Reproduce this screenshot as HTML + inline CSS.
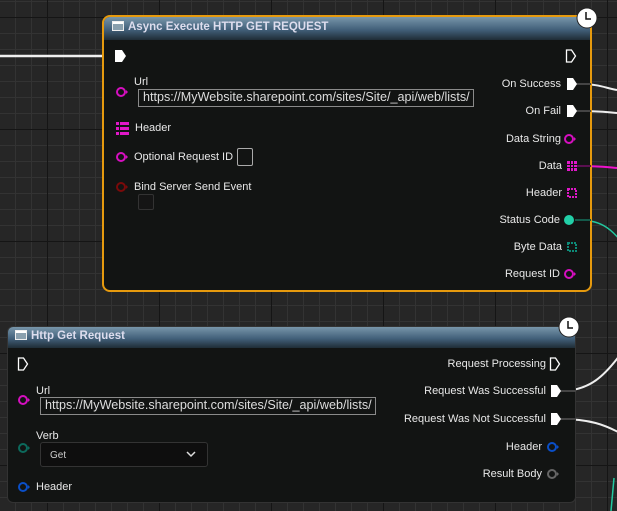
<!DOCTYPE html>
<html><head><meta charset="utf-8"><style>
*{margin:0;padding:0;box-sizing:border-box}
body{width:617px;height:511px;overflow:hidden;position:relative;font-family:"Liberation Sans",sans-serif;font-size:11px;color:#e8e8e8;
background-color:#262626;
background-image:
linear-gradient(to right,#151515 1px,transparent 1px),
linear-gradient(to bottom,#151515 1px,transparent 1px),
linear-gradient(to right,#333 1px,transparent 1px),
linear-gradient(to bottom,#333 1px,transparent 1px);
background-size:112px 112px,112px 112px,16px 16px,16px 16px;
background-position:47px 17px,47px 17px,15px 1px,15px 1px;}
.a{position:absolute;white-space:nowrap}
.node{position:absolute;background:#121413;border-radius:6px;overflow:hidden}
.hdr{position:absolute;left:0;right:0;top:0;background:linear-gradient(to bottom,#7896aa,#42607a 55%,#1f2d36);font-weight:bold;color:#dde;font-size:11.5px}
.ico{display:inline-block;width:12px;height:10px;border:1px solid #eee;background:linear-gradient(#fff 0 2px,#8aa0ae 2px);vertical-align:-1px;margin-right:4px}
.box{position:absolute;border:1px solid #8a8a8a;color:#ddd;font-size:12.6px;padding-left:4px;line-height:15px}
.r{text-align:right}
</style></head><body>
<svg class="a" style="left:0;top:0" width="617" height="511">
<path d="M0 56 L112 56" stroke="#f0f0f0" stroke-width="2.5" fill="none"/>
<path d="M578 84 C600 84 605 88 617 90" stroke="#eee" stroke-width="2" fill="none"/>
<path d="M578 111 C600 111 605 112 617 113" stroke="#eee" stroke-width="2" fill="none"/>
<path d="M578 166 C600 166 605 167 617 168" stroke="#ee11cc" stroke-width="2" fill="none"/>
<path d="M578 220 C600 220 610 228 620 240" stroke="#22c8a0" stroke-width="1.5" fill="none"/>
<path d="M560 391 C590 391 605 375 620 355" stroke="#eee" stroke-width="2" fill="none"/>
<path d="M560 419 C590 419 605 425 620 433" stroke="#eee" stroke-width="2" fill="none"/>
<path d="M614 478 L611 511" stroke="#22c8a0" stroke-width="1.5" fill="none"/>
</svg>

<!-- Node 1 -->
<div class="node" style="left:102px;top:15px;width:490px;height:277px;border:2px solid #e69a0e;border-radius:8px">
<div class="hdr" style="height:23px;padding:4px 0 0 8px"><span class="ico"></span>Async Execute HTTP GET REQUEST</div>
</div>
<div class="a" style="left:134px;top:76px">Url</div>
<div class="box" style="left:138px;top:89px;width:336px;height:18px">https://MyWebsite.sharepoint.com/sites/Site/_api/web/lists/</div>
<div class="a" style="left:135px;top:122px">Header</div>
<div class="a" style="left:134px;top:151px">Optional Request ID</div>
<div class="box" style="left:237px;top:148px;width:16px;height:18px;border-color:#aaa;border-radius:2px"></div>
<div class="a" style="left:134px;top:181px">Bind Server Send Event</div>
<div class="box" style="left:138px;top:194px;width:16px;height:16px;border-color:#333;background:#151515;border-radius:2px"></div>
<div class="a r" style="right:56px;top:78px">On Success</div>
<div class="a r" style="right:56px;top:105px">On Fail</div>
<div class="a r" style="right:56px;top:133px">Data String</div>
<div class="a r" style="right:55px;top:160px">Data</div>
<div class="a r" style="right:55px;top:187px">Header</div>
<div class="a r" style="right:57px;top:214px">Status Code</div>
<div class="a r" style="right:55px;top:241px">Byte Data</div>
<div class="a r" style="right:57px;top:268px">Request ID</div>

<!-- Node 2 -->
<div class="node" style="left:7px;top:326px;width:569px;height:177px;border:1px solid #333">
<div class="hdr" style="height:21px;padding:3px 0 0 7px"><span class="ico"></span>Http Get Request</div>
</div>
<div class="a" style="left:36px;top:385px">Url</div>
<div class="box" style="left:40px;top:397px;width:336px;height:18px">https://MyWebsite.sharepoint.com/sites/Site/_api/web/lists/</div>
<div class="a" style="left:36px;top:430px">Verb</div>
<div class="box" style="left:40px;top:442px;width:168px;height:25px;border-color:#333;border-radius:3px;background:#0e0e0e;font-size:10px;padding:5px 0 0 9px;color:#ccc">Get</div>
<div class="a" style="left:36px;top:481px">Header</div>
<div class="a r" style="right:71px;top:358px">Request Processing</div>
<div class="a r" style="right:71px;top:385px">Request Was Successful</div>
<div class="a r" style="right:71px;top:413px">Request Was Not Successful</div>
<div class="a r" style="right:75px;top:441px">Header</div>
<div class="a r" style="right:75px;top:468px">Result Body</div>

<svg class="a" style="left:0;top:0" width="617" height="511">
<!-- node1 pins -->
<path d="M575 84 h16" stroke="#444" stroke-width="2"/>
<path d="M575 111 h16" stroke="#444" stroke-width="2"/>
<path d="M575 166 h16" stroke="#5a1050" stroke-width="2"/>
<path d="M575 220 h16" stroke="#145a4a" stroke-width="2"/>
<path d="M115 50 h7 l4 6 l-4 6 h-7 z" fill="#fff"/>
<path d="M566.5 50 h5 l4 6 l-4 6 h-5 z" fill="none" stroke="#fff" stroke-width="1.3"/>
<path d="M567 78 h6 l4 6 l-4 6 h-6 z" fill="#fff"/>
<path d="M567 105 h6 l4 6 l-4 6 h-6 z" fill="#fff"/>
<g fill="none" stroke-width="2">
<circle cx="121" cy="92" r="4" stroke="#d60fc0"/>
<circle cx="121" cy="157" r="4" stroke="#d60fc0"/>
<circle cx="121" cy="187" r="4" stroke="#7a0a0a"/>
<circle cx="569" cy="139" r="4" stroke="#d60fc0"/>
<circle cx="569" cy="274" r="4" stroke="#d60fc0"/>
</g>
<g fill="#d60fc0"><path d="M126 90 l2 2 l-2 2z"/><path d="M126 155 l2 2 l-2 2z"/><path d="M574 137 l2 2 l-2 2z"/><path d="M574 272 l2 2 l-2 2z"/></g>
<path d="M126 185 l2 2 l-2 2z" fill="#7a0a0a"/>
<circle cx="569" cy="220" r="5" fill="#22d0a8"/>
<g fill="#e018c8"><rect x="116" y="122" width="3" height="3"/><rect x="120" y="122" width="9" height="3"/><rect x="116" y="127" width="3" height="3"/><rect x="120" y="127" width="9" height="3"/><rect x="116" y="132" width="3" height="3"/><rect x="120" y="132" width="9" height="3"/></g>
<g fill="#e018c8"><rect x="567" y="161" width="10" height="10"/></g>
<g fill="#121413"><rect x="570" y="161" width="1" height="10"/><rect x="573" y="161" width="1" height="10"/><rect x="567" y="164" width="10" height="1"/><rect x="567" y="167" width="10" height="1"/></g>
<rect x="568" y="189" width="8" height="8" fill="none" stroke="#e018c8" stroke-width="2" stroke-dasharray="2 1"/>
<rect x="568" y="243" width="8" height="8" fill="none" stroke="#0d8a78" stroke-width="2" stroke-dasharray="2 1"/>
<circle cx="587" cy="18" r="10" fill="#fff" stroke="#222" stroke-width="1"/>
<path d="M586 12 v7 h5" stroke="#111" stroke-width="1.5" fill="none"/>
<!-- node2 pins -->
<path d="M558 391 h18" stroke="#444" stroke-width="2"/>
<path d="M558 419 h18" stroke="#444" stroke-width="2"/>
<path d="M18.5 358 h5 l4 6 l-4 6 h-5 z" fill="none" stroke="#fff" stroke-width="1.3"/>
<path d="M550.5 358 h5 l4 6 l-4 6 h-5 z" fill="none" stroke="#fff" stroke-width="1.3"/>
<path d="M551 385 h6 l4 6 l-4 6 h-6 z" fill="#fff"/>
<path d="M551 413 h6 l4 6 l-4 6 h-6 z" fill="#fff"/>
<g fill="none" stroke-width="2">
<circle cx="23" cy="400" r="4" stroke="#d60fc0"/>
<circle cx="23" cy="448" r="4" stroke="#0c6a5c"/>
<circle cx="23" cy="487" r="4" stroke="#0a4fc8"/>
<circle cx="552" cy="447" r="4" stroke="#0a4fc8"/>
<circle cx="552" cy="474" r="4" stroke="#666"/>
</g>
<path d="M28 398 l2 2 l-2 2z" fill="#d60fc0"/><path d="M28 446 l2 2 l-2 2z" fill="#0c6a5c"/><path d="M28 485 l2 2 l-2 2z" fill="#0a4fc8"/>
<path d="M557 445 l2 2 l-2 2z" fill="#0a4fc8"/><path d="M557 472 l2 2 l-2 2z" fill="#666"/>
<path d="M187 452 l4 4 l4 -4" stroke="#ddd" stroke-width="1.5" fill="none"/>
<circle cx="569" cy="327" r="10" fill="#fff" stroke="#222"/>
<path d="M568 321 v7 h5" stroke="#111" stroke-width="1.5" fill="none"/>
</svg>
</body></html>
